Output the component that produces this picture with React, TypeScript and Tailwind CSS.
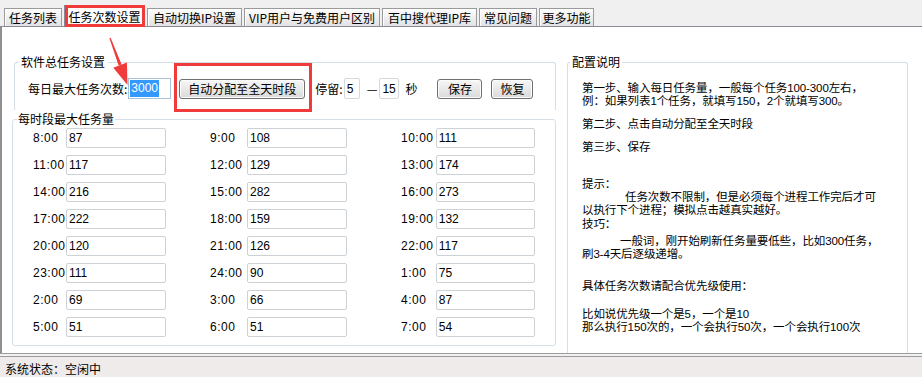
import React from "react";

const tabs = [
  { t: "任务列表", w: "w-[58px]", sel: false },
  { t: "任务次数设置", w: "w-[81px]", sel: true },
  { t: "自动切换IP设置", w: "w-[95px]", sel: false },
  { t: "VIP用户与免费用户区别", w: "w-[136px]", sel: false },
  { t: "百中搜代理IP库", w: "w-[95px]", sel: false },
  { t: "常见问题", w: "w-[58px]", sel: false },
  { t: "更多功能", w: "w-[55px]", sel: false },
];

const rows: [string, string][][] = [
  [["8:00", "87"], ["9:00", "108"], ["10:00", "111"]],
  [["11:00", "117"], ["12:00", "129"], ["13:00", "174"]],
  [["14:00", "216"], ["15:00", "282"], ["16:00", "273"]],
  [["17:00", "222"], ["18:00", "159"], ["19:00", "132"]],
  [["20:00", "120"], ["21:00", "126"], ["22:00", "117"]],
  [["23:00", "111"], ["24:00", "90"], ["1:00", "75"]],
  [["2:00", "69"], ["3:00", "66"], ["4:00", "87"]],
  [["5:00", "51"], ["6:00", "51"], ["7:00", "54"]],
];

const labelW = ["w-[33px]", "w-[37px]", "w-[35px]"];

function Btn({ children, w }: { children: React.ReactNode; w: string }) {
  return (
    <div
      className={`${w} h-[20px] flex items-center justify-center border border-[#707070] rounded-[3px] bg-gradient-to-b from-[#f7f7f7] to-[#dadada] text-[12px] leading-[14px] text-black shadow-[inset_0_0_0_1px_#fcfcfc]`}
    >
      {children}
    </div>
  );
}

export default function App() {
  return (
    <div className="relative w-[922px] h-[379px] overflow-hidden bg-white text-black font-['Noto_Sans_CJK_SC',sans-serif] flex flex-col">
      {/* Tab strip */}
      <div className="h-[27px] shrink-0 bg-[#f0f0f0] border-b border-[#8a8a98] flex items-end pl-[4px] gap-[2px]">
        {tabs.map((tb) =>
          tb.sel ? (
            <div
              key={tb.t}
              className={`${tb.w} h-[22px] -mb-px bg-white border border-b-0 border-[#8a8a98] flex items-center justify-center text-[12px] leading-[14px]`}
            >
              {tb.t}
            </div>
          ) : (
            <div
              key={tb.t}
              className={`${tb.w} h-[18px] border border-b-0 border-[#9a9a9a] bg-gradient-to-b from-[#fdfdfd] to-[#e2e2e2] shadow-[inset_1px_1px_0_#ffffff] flex items-center justify-center text-[12px] leading-[14px] whitespace-nowrap`}
            >
              {tb.t}
            </div>
          )
        )}
      </div>

      {/* Content */}
      <div className="h-[326px] shrink-0 border-l-2 border-[#8f8f8f] flex">
        {/* Left column */}
        <div className="ml-[10px] w-[544px] flex flex-col">
          {/* Group 1 */}
          <div className="relative mt-[35px] ml-[2px] w-[542px] h-[48px] border-t border-l border-r border-[#d5dfe5] rounded-t-[3px]">
            <span className="absolute left-[3px] -top-[8px] bg-white px-[3px] text-[12px] leading-[14px]">
              软件总任务设置
            </span>
            <div className="flex items-center pl-[13px] pt-[15px] text-[12px] leading-[14px]">
              <span className="whitespace-nowrap">每日最大任务次数:</span>
              <div className="ml-[1px] w-[43px] h-[21px] border border-[#a9c2d8] flex items-center pl-[1px]">
                <span className="bg-[#3399ff] text-white font-['Liberation_Sans',sans-serif] leading-[17px] px-px">
                  3000
                </span>
              </div>
              <div className="ml-[8px]">
                <Btn w="w-[126px]">自动分配至全天时段</Btn>
              </div>
              <span className="ml-[10px] whitespace-nowrap">停留:</span>
              <div className="ml-[1px] w-[16px] h-[21px] border border-[#d3d8dc] rounded-[2px] flex items-center pl-[2px] font-['Liberation_Sans',sans-serif]">
                5
              </div>
              <span className="ml-[7px]">—</span>
              <div className="ml-[2px] w-[20px] h-[21px] border border-[#d3d8dc] rounded-[2px] flex items-center pl-[2px] font-['Liberation_Sans',sans-serif]">
                15
              </div>
              <span className="ml-[6px]">秒</span>
              <div className="ml-[20px]">
                <Btn w="w-[45px]">保存</Btn>
              </div>
              <div className="ml-[9px]">
                <Btn w="w-[42px]">恢复</Btn>
              </div>
            </div>
          </div>

          {/* Group 2 */}
          <div className="relative mt-[9px] w-[544px] h-[227px] border border-[#d5dfe5] rounded-[3px]">
            <span className="absolute left-[4px] -top-[8px] bg-white px-[1px] text-[12px] leading-[14px]">
              每时段最大任务量
            </span>
            <div className="pl-[20px] pt-[8px] flex flex-col gap-[7px]">
              {rows.map((r, i) => (
                <div key={i} className="grid grid-cols-[177px_191px_134px]">
                  {r.map(([lab, val], j) => (
                    <div key={j} className="flex items-center">
                      <span className={`${labelW[j]} text-[12px] leading-[14px] font-['Liberation_Sans',sans-serif] tracking-[0.5px]`}>
                        {lab}
                      </span>
                      <div className="w-[100px] h-[20px] border border-[#cdd2d6] rounded-[2px] flex items-center pl-[2px] text-[12px] font-['Liberation_Sans',sans-serif]">
                        {val}
                      </div>
                    </div>
                  ))}
                </div>
              ))}
            </div>
          </div>
        </div>

        {/* Right column */}
        <div className="relative ml-[11px] mt-[35px] w-[341px] border-t border-l border-r border-[#d5dfe5] rounded-t-[3px]">
          <span className="absolute left-[2px] -top-[8px] bg-white px-[2px] text-[12px] leading-[14px]">
            配置说明
          </span>
          <div className="pl-[14px] pt-[19px] font-['Liberation_Sans','Noto_Sans_CJK_SC',sans-serif] text-[11.5px] leading-[13px] whitespace-nowrap tracking-[-0.1px]">
            <div>第一步、输入每日任务量，一般每个任务100-300左右，</div>
            <div>例：如果列表1个任务，就填写150，2个就填写300。</div>
            <div className="mt-[10px]">第二步、点击自动分配至全天时段</div>
            <div className="mt-[10px]">第三步、保存</div>
            <div className="mt-[24px]">提示：</div>
            <div className="pl-[43px]">任务次数不限制，但是必须每个进程工作完后才可</div>
            <div>以执行下个进程；模拟点击越真实越好。</div>
            <div className="mt-[1px]">技巧：</div>
            <div className="mt-[4px] pl-[38px]">一般词，刚开始刷新任务量要低些，比如300任务，</div>
            <div>刷3-4天后逐级递增。</div>
            <div className="mt-[19px]">具体任务次数请配合优先级使用：</div>
            <div className="mt-[15px]">比如说优先级一个是5，一个是10</div>
            <div>那么执行150次的，一个会执行50次，一个会执行100次</div>
          </div>
        </div>
      </div>

      {/* Status bar */}
      <div className="h-[4px] shrink-0 border-t border-b border-[#9c9c9c] bg-[#f2f2f2]" />
      <div className="h-[20px] shrink-0 bg-[#efebea] flex items-center pl-[5px] pt-[3px] text-[12px] leading-[14px]">
        系统状态：空闲中
      </div>
      <div className="h-[2px] shrink-0 bg-white" />

      {/* Annotations */}
      <div className="absolute left-[65px] top-[5px] w-[80px] h-[22px] border-[3px] border-[#ef3b3b] pointer-events-none" />
      <div className="absolute left-[174px] top-[63px] w-[138px] h-[49px] border-[3px] border-[#ef3b3b] pointer-events-none" />
      <svg className="absolute left-0 top-0 pointer-events-none" width="922" height="379">
        <polygon points="109.4,38.3 110.6,37.7 121.6,64.4 118.6,65.6" fill="#ef3b3b" />
        <polygon points="113.3,67.8 126.9,62.6 127.5,85" fill="#ef3b3b" />
      </svg>
    </div>
  );
}
